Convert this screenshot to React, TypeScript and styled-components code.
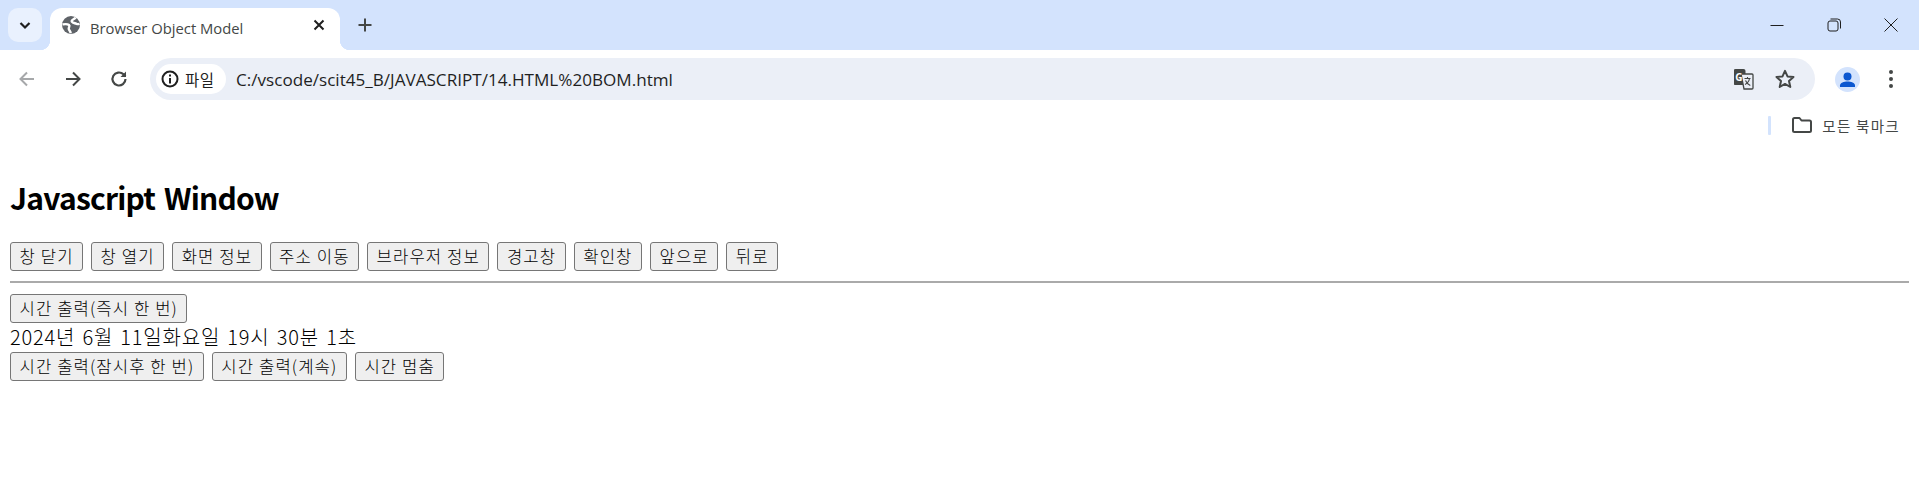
import React from "react";
import styled, { createGlobalStyle } from "styled-components";

const GlobalStyle = createGlobalStyle`
  html, body {
    margin: 0;
    padding: 0;
    background: #fff;
  }
  body {
    font-family: "Noto Sans CJK KR", "Open Sans", sans-serif;
    overflow: hidden;
  }
`;

const Shell = styled.div`
  width: 1919px;
  height: 478px;
  display: flex;
  flex-direction: column;
  overflow: hidden;
`;

const TabStrip = styled.div`
  height: 50px;
  background: #d3e3fd;
  display: flex;
  align-items: flex-start;
  padding: 8px 0 0 8px;
  box-sizing: border-box;
`;

const TabSearch = styled.div`
  width: 34px;
  height: 34px;
  border-radius: 10px;
  background: #e9f1fe;
  display: flex;
  align-items: center;
  justify-content: center;
  margin-right: 8px;
  color: #1f1f1f;
`;

const Tab = styled.div`
  position: relative;
  width: 290px;
  height: 42px;
  background: #fff;
  border-radius: 12px 12px 0 0;
  display: flex;
  align-items: flex-start;
  padding: 7px 11px 0 11px;
  box-sizing: border-box;
  color: #444746;

  &::before,
  &::after {
    content: "";
    position: absolute;
    bottom: 0;
    width: 10px;
    height: 10px;
  }
  &::before {
    left: -10px;
    background: radial-gradient(circle at 0 0, #d3e3fd 10px, #fff 10.5px);
  }
  &::after {
    right: -10px;
    background: radial-gradient(circle at 100% 0, #d3e3fd 10px, #fff 10.5px);
  }
`;

const TabTitle = styled.span`
  flex: 1;
  margin-left: 9px;
  font-family: "Open Sans", "Noto Sans", sans-serif;
  font-size: 14.8px;
  line-height: 22px;
  padding-top: 2px;
  color: #444746;
  white-space: nowrap;
`;

const NewTab = styled.div`
  width: 28px;
  height: 34px;
  margin-left: 11px;
  display: flex;
  align-items: center;
  justify-content: center;
  color: #444746;
`;

const WindowControls = styled.div`
  margin-left: auto;
  display: flex;
  margin-top: -8px;
  color: #1f1f1f;
`;

const WindowButton = styled.div`
  width: 57px;
  height: 50px;
  display: flex;
  align-items: center;
  justify-content: center;
`;

const Toolbar = styled.div`
  height: 58px;
  background: #fff;
  border-radius: 12px 12px 0 0;
  display: flex;
  align-items: center;
  padding: 0 10px 0 4px;
  box-sizing: border-box;
  position: relative;
  z-index: 1;
`;

const NavButton = styled.div<{ $dim?: boolean }>`
  width: 46px;
  height: 40px;
  display: flex;
  align-items: center;
  justify-content: center;
  color: ${(p) => (p.$dim ? "#a6a8aa" : "#444746")};
`;

const Omnibox = styled.div`
  margin-left: 8px;
  width: 1665px;
  height: 42px;
  border-radius: 21px;
  background: #ebeff7;
  display: flex;
  align-items: center;
  padding: 0 10px 0 6px;
  box-sizing: border-box;
`;

const SiteChip = styled.div`
  width: 70px;
  height: 30px;
  border-radius: 15px;
  background: #fff;
  display: flex;
  align-items: center;
  padding-left: 4px;
  box-sizing: border-box;
  gap: 5px;
  font-size: 15.5px;
  letter-spacing: 0.5px;
  color: #1f1f1f;
`;

const Url = styled.span`
  flex: 1;
  margin-left: 10px;
  font-family: "Open Sans", "Noto Sans", sans-serif;
  font-size: 17.1px;
  color: #1f1f1f;
  white-space: nowrap;
`;

const OmniIcon = styled.div`
  width: 40px;
  display: flex;
  justify-content: center;
  color: #444746;
`;

const Avatar = styled.div`
  width: 25px;
  height: 25px;
  border-radius: 50%;
  background: #d3e3fd;
  margin-left: 20px;
  overflow: hidden;
  display: flex;
`;

const Dots = styled.div`
  margin-left: 21px;
  color: #444746;
  display: flex;
`;

const BookmarkBar = styled.div`
  height: 34px;
  display: flex;
  align-items: center;
  justify-content: flex-end;
  padding-right: 19px;
  box-sizing: border-box;
  font-size: 14.5px;
  letter-spacing: 1.3px;
  color: #444746;
`;

const BarDivider = styled.div`
  width: 3px;
  height: 19px;
  border-radius: 1px;
  background: #d3e3fd;
  margin-right: 20px;
`;

const BookmarkLabel = styled.span`
  margin-left: 9px;
`;

const Page = styled.div`
  padding: 0 10px;
  color: #000;
`;

const Heading = styled.h1`
  margin: 33px 0 23px;
  font-size: 30px;
  line-height: 44px;
  letter-spacing: -0.8px;
  word-spacing: 3px;
  font-weight: 700;
  font-family: "Noto Sans CJK KR", "Open Sans", sans-serif;
`;

const ButtonRow = styled.div`
  display: flex;
  gap: 8px;
  height: 30px;
`;

const PageButton = styled.button`
  height: 29px;
  margin: 0;
  padding: 0 8.5px;
  border: 1.25px solid #767676;
  border-radius: 3px;
  background: #efefef;
  color: #000;
  font-family: "Noto Sans CJK KR", sans-serif;
  font-size: 16.67px;
  font-weight: 300;
  letter-spacing: 1.1px;
  line-height: 1;
  white-space: nowrap;
`;

const Rule = styled.hr`
  margin: 9px 0 11px;
  border: 0;
  height: 2px;
  background: #aaa;
`;

const TimeText = styled.div`
  height: 28px;
  line-height: 26px;
  font-size: 20px;
  font-weight: 300;
  letter-spacing: 0.8px;
  word-spacing: 2px;
  white-space: nowrap;
`;

const Icon = styled.svg`
  display: block;
  flex: none;
`;

const row1 = ["창 닫기", "창 열기", "화면 정보", "주소 이동", "브라우저 정보", "경고창", "확인창", "앞으로", "뒤로"];
const row2 = ["시간 출력(잠시후 한 번)", "시간 출력(계속)", "시간 멈춤"];

export default function App() {
  return (
    <Shell>
      <GlobalStyle />
      <TabStrip>
        <TabSearch>
          <Icon width="14" height="14" viewBox="0 0 14 14" fill="none" stroke="currentColor" strokeWidth="2.2">
            <path d="M2.5 5l4.5 4.5L11.500 5" />
          </Icon>
        </TabSearch>
        <Tab>
          <Icon width="20" height="20" viewBox="0 0 20 20">
            <circle cx="10" cy="10" r="9" fill="#5f6368" />
            <path
              d="M1.500 9.500c2.500-.5 4.500-1 6.500.5 1.500 1.200-.8 2.500-.2 4.200.4 1.200 1.800 2.200 1.900 4M14.500 2.500c-.8 1.800-3.500 1.800-3.800 3.500-.3 1.800 2.800 2 4.800 2.800 1.200.5 2.300.4 3 .1"
              fill="none"
              stroke="#fff"
              strokeWidth="2.400"
            />
          </Icon>
          <TabTitle>Browser Object Model</TabTitle>
          <Icon width="20" height="20" viewBox="0 0 20 20" fill="none" stroke="#1f1f1f" strokeWidth="2">
            <path d="M5.500 5.500l9 9M14.500 5.500l-9 9" />
          </Icon>
        </Tab>
        <NewTab>
          <Icon width="18" height="18" viewBox="0 0 18 18" fill="none" stroke="currentColor" strokeWidth="2">
            <path d="M9 2.500v13M2.500 9h13" />
          </Icon>
        </NewTab>
        <WindowControls>
          <WindowButton>
            <Icon width="14" height="14" viewBox="0 0 14 14" fill="none" stroke="currentColor" strokeWidth="1">
              <path d="M0.500 7.500h13" />
            </Icon>
          </WindowButton>
          <WindowButton>
            <Icon width="14" height="14" viewBox="0 0 14 14" fill="none" stroke="currentColor" strokeWidth="1">
              <rect x="1" y="3" width="10" height="10" rx="2" />
              <path d="M3.500 1h7a3 3 0 0 1 3 3v6.500" />
            </Icon>
          </WindowButton>
          <WindowButton>
            <Icon width="14" height="14" viewBox="0 0 14 14" fill="none" stroke="currentColor" strokeWidth="1">
              <path d="M.5.500l13 13M13.500.5l-13 13" />
            </Icon>
          </WindowButton>
        </WindowControls>
      </TabStrip>

      <Toolbar>
        <NavButton $dim>
          <Icon width="20" height="20" viewBox="0 0 20 20" fill="none" stroke="currentColor" strokeWidth="2">
            <path d="M17 10H4M10 3.500L3.500 10l6.500 6.500" />
          </Icon>
        </NavButton>
        <NavButton>
          <Icon width="20" height="20" viewBox="0 0 20 20" fill="none" stroke="currentColor" strokeWidth="2">
            <path d="M3 10h13M10 3.500l6.500 6.500-6.500 6.500" />
          </Icon>
        </NavButton>
        <NavButton>
          <Icon width="20" height="20" viewBox="0 0 20 20" fill="none" stroke="currentColor" strokeWidth="2.200">
            <path d="M16.500 10a6.500 6.500 0 1 1-2-4.700L16.500 7.500" />
            <path d="M17 2.500V8h-5.500" fill="currentColor" stroke="none" />
          </Icon>
        </NavButton>
        <Omnibox>
          <SiteChip>
            <Icon width="20" height="20" viewBox="0 0 20 20" fill="none" stroke="#1f1f1f" strokeWidth="2">
              <circle cx="10" cy="10" r="7.500" />
              <path d="M10 9v5.500M10 5.500v2" />
            </Icon>
            <span>파일</span>
          </SiteChip>
          <Url>C:/vscode/scit45_B/JAVASCRIPT/14.HTML%20BOM.html</Url>
          <OmniIcon>
            <Icon width="22" height="22" viewBox="2 0 22 22">
              <rect x="1.500" y="1" width="12" height="16" rx="2" fill="#444746" />
              <path d="M9 6h11a1 1 0 0 1 1 1v13a1 1 0 0 1-1 1h-8z" fill="#ebeff7" stroke="#444746" strokeWidth="1.300" />
              <text x="3.200" y="12.500" fontSize="10" fontWeight="700" fill="#fff" fontFamily="Open Sans, sans-serif">G</text>
              <path d="M12.500 10.500h6M15.500 9v1.500M17.500 10.500c-.5 3-2.500 5-4.500 6M13.500 12.500c.8 2 2.800 4 4.800 5" fill="none" stroke="#444746" strokeWidth="1.100" />
            </Icon>
          </OmniIcon>
          <OmniIcon>
            <Icon width="22" height="22" viewBox="0 0 22 22" fill="none" stroke="currentColor" strokeWidth="2" strokeLinejoin="round">
              <path d="M11 2.800l2.500 5.600 6 .6-4.500 4 1.300 6-5.300-3.100-5.300 3.100 1.300-6-4.500-4 6-.6z" />
            </Icon>
          </OmniIcon>
        </Omnibox>
        <Avatar>
          <Icon width="25" height="25" viewBox="0 0 25 25" fill="#0b57d0">
            <circle cx="12.500" cy="9.500" r="4" />
            <path d="M5 20v-1.500c0-2.600 4-4 7.500-4s7.500 1.400 7.500 4V20z" />
          </Icon>
        </Avatar>
        <Dots>
          <Icon width="20" height="20" viewBox="0 0 20 20" fill="currentColor">
            <circle cx="10" cy="3" r="2" />
            <circle cx="10" cy="10" r="2" />
            <circle cx="10" cy="17" r="2" />
          </Icon>
        </Dots>
      </Toolbar>

      <BookmarkBar>
        <BarDivider />
        <Icon width="22" height="18" viewBox="0 0 22 18" fill="none" stroke="#444746" strokeWidth="2" strokeLinejoin="round">
          <path d="M2 3.500a1.500 1.500 0 0 1 1.500-1.500h5l2 2.500h8a1.500 1.500 0 0 1 1.500 1.500v8.500a1.500 1.500 0 0 1-1.500 1.500h-15A1.500 1.500 0 0 1 2 14.500z" />
        </Icon>
        <BookmarkLabel>모든 북마크</BookmarkLabel>
      </BookmarkBar>

      <Page>
        <Heading>Javascript Window</Heading>
        <ButtonRow>
          {row1.map((label) => (
            <PageButton key={label}>{label}</PageButton>
          ))}
        </ButtonRow>
        <Rule />
        <ButtonRow>
          <PageButton>시간 출력(즉시 한 번)</PageButton>
        </ButtonRow>
        <TimeText>2024년 6월 11일화요일 19시 30분 1초</TimeText>
        <ButtonRow>
          {row2.map((label) => (
            <PageButton key={label}>{label}</PageButton>
          ))}
        </ButtonRow>
      </Page>
    </Shell>
  );
}
